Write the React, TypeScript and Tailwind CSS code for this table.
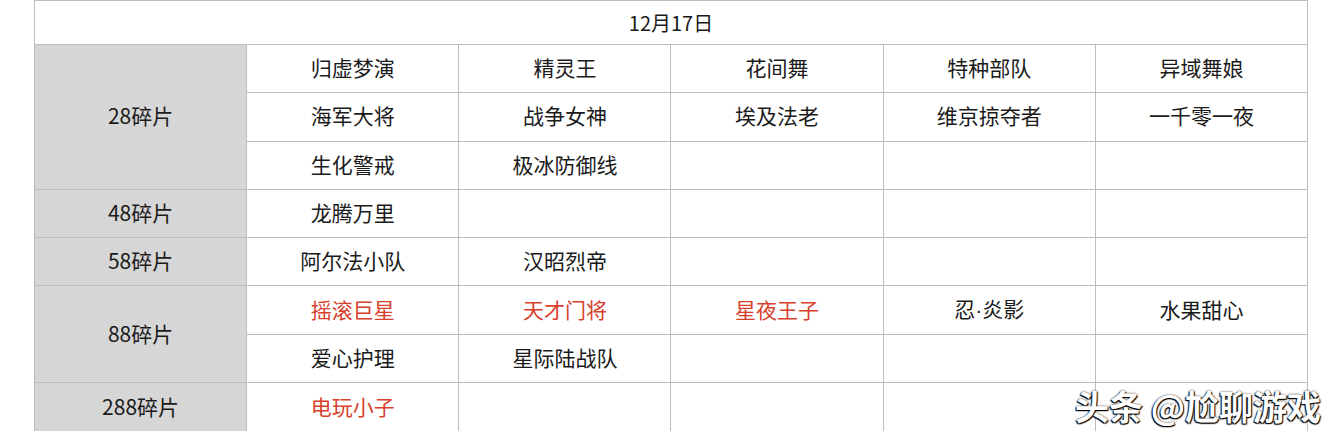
const RED = 'text-[#d8402c]'

type Cell = { t: string; red?: boolean }

const groups: { label: string; rows: Cell[][] }[] = [
  {
    label: '28碎片',
    rows: [
      [{ t: '归虚梦演' }, { t: '精灵王' }, { t: '花间舞' }, { t: '特种部队' }, { t: '异域舞娘' }],
      [{ t: '海军大将' }, { t: '战争女神' }, { t: '埃及法老' }, { t: '维京掠夺者' }, { t: '一千零一夜' }],
      [{ t: '生化警戒' }, { t: '极冰防御线' }, { t: '' }, { t: '' }, { t: '' }],
    ],
  },
  { label: '48碎片', rows: [[{ t: '龙腾万里' }, { t: '' }, { t: '' }, { t: '' }, { t: '' }]] },
  { label: '58碎片', rows: [[{ t: '阿尔法小队' }, { t: '汉昭烈帝' }, { t: '' }, { t: '' }, { t: '' }]] },
  {
    label: '88碎片',
    rows: [
      [{ t: '摇滚巨星', red: true }, { t: '天才门将', red: true }, { t: '星夜王子', red: true }, { t: '忍·炎影' }, { t: '水果甜心' }],
      [{ t: '爱心护理' }, { t: '星际陆战队' }, { t: '' }, { t: '' }, { t: '' }],
    ],
  },
  { label: '288碎片', rows: [[{ t: '电玩小子', red: true }, { t: '' }, { t: '' }, { t: '' }, { t: '' }]] },
]

// the middle dot is half-width in the picture
function CellText({ t }: { t: string }) {
  if (!t.includes('·')) return <>{t}</>
  const [a, b] = t.split('·')
  return (
    <>
      {a}
      <span style={{ fontFamily: '"Liberation Sans", sans-serif' }}>·</span>
      {b}
    </>
  )
}

export default function App() {
  return (
    <div
      className="relative w-[1334px] h-[431px] overflow-hidden bg-white"
      style={{ fontFamily: '"Noto Sans CJK SC", "Noto Sans", sans-serif' }}
    >
      <table className="ml-[34px] w-[1274px] table-fixed border-collapse text-[21px] leading-[28px] text-[#1a1a1a]">
        <colgroup>
          <col className="w-[212px]" />
          <col className="w-[212px]" />
          <col className="w-[212px]" />
          <col className="w-[212px]" />
          <col className="w-[212px]" />
          <col className="w-[212px]" />
        </colgroup>
        <tbody>
          <tr className="h-[44px]">
            <td colSpan={6} className="border border-[#bcbcbc] text-center text-[20px] align-middle">
              12月17日
            </td>
          </tr>
          {groups.map((g, gi) =>
            g.rows.map((row, ri) => (
              <tr key={g.label + ri} className={gi === groups.length - 1 ? 'h-[60px]' : 'h-[48.3px]'}>
                {ri === 0 && (
                  <td
                    rowSpan={g.rows.length}
                    className={`border border-[#bcbcbc] bg-[#d6d6d6] text-center ${gi === groups.length - 1 ? 'align-top pt-[9px]' : 'align-middle pb-[3px]'}`}
                  >
                    {g.label}
                  </td>
                )}
                {row.map((c, ci) => (
                  <td
                    key={ci}
                    className={`border border-[#bcbcbc] text-center ${gi === groups.length - 1 ? 'align-top pt-[9px]' : 'align-middle pb-[3px]'} ${c.red ? RED : ''}`}
                  >
                    <CellText t={c.t} />
                  </td>
                ))}
              </tr>
            ))
          )}
        </tbody>
      </table>
      <div
        className="absolute left-[1075px] top-[380px] text-[34px] font-bold text-white whitespace-nowrap"
        style={{ textShadow: '-1px 1px 1px #000, 1px 1px 1px #000, 0 0 2px #333' }}
      >
        头条 @尬聊游戏
      </div>
    </div>
  )
}
